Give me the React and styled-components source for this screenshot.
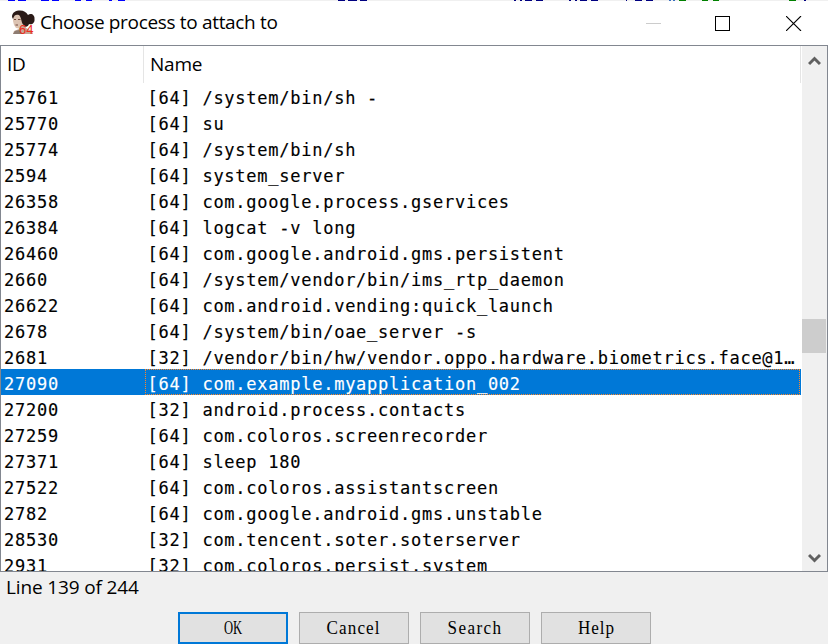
import React from 'react';
import styled, { createGlobalStyle } from 'styled-components';

const Global = createGlobalStyle`
  * { box-sizing: border-box; }
  body { margin: 0; overflow: hidden; background: #f0f0f0; }
`;

const Window = styled.div`
  width: 828px;
  height: 644px;
  display: flex;
  flex-direction: column;
  overflow: hidden;
  background: #f0f0f0;
  color: #000;
  font: 19px/26px "Open Sans", "Noto Sans", sans-serif;
`;

const Backdrop = styled.svg`
  display: block;
  flex: none;
  width: 828px;
  height: 1px;
`;

const TitleBar = styled.header`
  height: 44px;
  flex: none;
  display: flex;
  align-items: center;
  padding: 0 26px 0 11px;
  background: #fff;
`;

const AppIcon = styled.svg`
  width: 25px;
  height: 26px;
  flex: none;
`;

const Title = styled.h1`
  margin: 0 auto 2px 4px;
  font: inherit;
  white-space: nowrap;
  letter-spacing: ${(p) => p.$track}px;
`;

const Controls = styled.div`
  display: flex;
  gap: 54px;
  svg { display: block; }
  svg:last-child { margin-left: 2px; }
`;

const ListFrame = styled.main`
  height: 527px;
  flex: none;
  display: flex;
  border: 1px solid #828790;
  background: #fff;
`;

const Table = styled.div`
  width: 800px;
  height: 525px;
  overflow: hidden;
`;

const HeaderRow = styled.div`
  display: grid;
  grid-template-columns: 143px 657px;
  height: 37px;
`;

const HeaderCell = styled.div`
  border-right: 1px solid #e5e5e5;
  padding: 5px 0 0 6px;
  letter-spacing: -0.2px;
`;

const Row = styled.div`
  display: grid;
  grid-template-columns: 144px 655px;
  height: 26px;
  font: 17px/24px "DejaVu Sans Mono", "Liberation Mono", monospace;
  letter-spacing: 0.745px;
  -webkit-text-stroke: 0.15px currentColor;
  white-space: pre;
  color: ${(p) => (p.$selected ? '#fff' : '#000')};
  background: ${(p) => (p.$selected ? '#0078d7' : 'transparent')};
`;

const Cell = styled.div`
  padding: 3px 0 0 ${(p) => (p.$name ? 2.5 : 3)}px;
  height: 26px;
  outline: ${(p) => (p.$focused ? '1px dotted #ff8728' : 'none')};
  outline-offset: -1px;
`;

const ScrollBar = styled.div`
  width: 25px;
  margin-left: 1px;
  display: flex;
  flex-direction: column;
  background: #f0f0f0;
`;

const Arrow = styled.svg`
  display: block;
  width: 13px;
  height: 10px;
  margin: ${(p) => (p.$down ? 'auto 0 8px 6px' : '10px 0 0 6px')};
`;

const Thumb = styled.div`
  width: 24px;
  height: 34px;
  margin-top: 253px;
  background: #cdcdcd;
`;

const Status = styled.div`
  height: 40px;
  flex: none;
  padding: 2px 0 0 6px;
  letter-spacing: ${(p) => p.$track}px;
`;

const Footer = styled.footer`
  display: flex;
  gap: 11px;
  padding-left: 178px;
`;

const Button = styled.button`
  width: 110px;
  height: 32px;
  padding: 0;
  display: flex;
  align-items: center;
  justify-content: center;
  border: ${(p) => (p.$primary ? '2px solid #0078d7' : '1px solid #adadad')};
  border-radius: 0;
  background: #e1e1e1;
  color: #000;
  font: 18px/24px "Liberation Serif", serif;
`;

const Caption = styled.span`
  display: block;
  letter-spacing: ${(p) => p.$track}px;
  transform: scaleX(${(p) => p.$squeeze || 1});
`;

const processes = [
  ['25761', '[64] /system/bin/sh -'],
  ['25770', '[64] su'],
  ['25774', '[64] /system/bin/sh'],
  ['2594', '[64] system_server'],
  ['26358', '[64] com.google.process.gservices'],
  ['26384', '[64] logcat -v long'],
  ['26460', '[64] com.google.android.gms.persistent'],
  ['2660', '[64] /system/vendor/bin/ims_rtp_daemon'],
  ['26622', '[64] com.android.vending:quick_launch'],
  ['2678', '[64] /system/bin/oae_server -s'],
  ['2681', '[32] /vendor/bin/hw/vendor.oppo.hardware.biometrics.face@1…'],
  ['27090', '[64] com.example.myapplication_002'],
  ['27200', '[32] android.process.contacts'],
  ['27259', '[64] com.coloros.screenrecorder'],
  ['27371', '[64] sleep 180'],
  ['27522', '[64] com.coloros.assistantscreen'],
  ['2782', '[64] com.google.android.gms.unstable'],
  ['28530', '[32] com.tencent.soter.soterserver'],
  ['2931', '[32] com.coloros.persist.system'],
];

const marks = [
  [8, 7, '#00f'], [18, 8, '#00f'], [41, 8, '#00f'], [52, 7, '#00f'],
  [75, 6, '#00f'], [86, 6, '#00f'], [109, 3, '#00f'], [118, 7, '#00f'],
  [338, 7, '#000080'], [348, 9, '#000080'], [360, 7, '#000080'],
  [514, 2, '#000080'], [520, 2, '#000080'], [525, 7, '#000080'], [536, 7, '#000080'],
  [569, 2, '#000080'], [575, 2, '#000080'], [580, 7, '#000080'], [591, 7, '#000080'],
  [626, 1, '#000080'], [635, 7, '#000080'], [646, 7, '#000080'],
  [669, 2, '#3a6fc0'], [673, 2, '#3a6fc0'], [679, 7, '#008000'],
  [702, 6, '#008000'], [713, 6, '#008000'], [789, 7, '#008000'], [804, 2, '#000080'],
];

export default function App() {
  return (
    <Window>
      <Global />
      <Backdrop viewBox="0 0 828 1" shapeRendering="crispEdges">
        {marks.map(([x, w, c]) => <rect key={x} x={x} width={w} height="1" fill={c} />)}
      </Backdrop>
      <TitleBar>
        <AppIcon viewBox="0 0 25 26">
          <path d="M7 14L14 12L15 18L21 21L22 24H2L3 21L8 19Z" fill="#c3a796" />
          <path d="M2 24L4 21L8 20L12 24Z" fill="#8d7c72" />
          <path d="M2 7L5 4L10 4L13 9L12 15L8 18.5L5 18L3 15L2 11Z" fill="#dcc3b2" />
          <path d="M1 7C1 2 5 .5 9 .5C13 .5 15 2 17 5C20 2.500 24 5 23.500 9C24 13 21 15 18 14C17 17 14 18 13 15C10 14 11 8 8 5C5 4 3 5 2 9Z" fill="#2a1a17" />
          <path d="M3 9.500H5M7 9.500H9.500M4.500 15H7" stroke="#70493d" />
          <text x="8" y="23.500" fontFamily="Liberation Sans, sans-serif" fontSize="13" fill="#ef2c1b">64</text>
        </AppIcon>
        <Title $track={-0.33}>Choose process to attach to</Title>
        <Controls>
          <svg width="15" height="15"><path d="M0 7.5H15" stroke="#ccc" /></svg>
          <svg width="15" height="15"><rect x=".5" y=".5" width="14" height="14" fill="none" stroke="#000" /></svg>
          <svg width="16" height="15"><path d="M0 0L15 15M15 0L0 15" stroke="#000" strokeWidth="1.1" /></svg>
        </Controls>
      </TitleBar>
      <ListFrame>
        <Table>
          <HeaderRow>
            <HeaderCell>ID</HeaderCell>
            <HeaderCell>Name</HeaderCell>
          </HeaderRow>
          {processes.map(([id, name]) => (
            <Row key={id} $selected={id === '27090'}>
              <Cell>{id}</Cell>
              <Cell $name $focused={id === '27090'}>{name}</Cell>
            </Row>
          ))}
        </Table>
        <ScrollBar>
          <Arrow viewBox="0 0 13 10"><path d="M1 8L6.5 2.5L12 8" fill="none" stroke="#606060" strokeWidth="3" /></Arrow>
          <Thumb />
          <Arrow $down viewBox="0 0 13 10"><path d="M1 2L6.5 7.5L12 2" fill="none" stroke="#606060" strokeWidth="3" /></Arrow>
        </ScrollBar>
      </ListFrame>
      <Status $track={-0.15}>Line 139 of 244</Status>
      <Footer>
        <Button $primary><Caption $track={0} $squeeze={0.7}>OK</Caption></Button>
        <Button><Caption $track={1.2} $squeeze={0.95}>Cancel</Caption></Button>
        <Button><Caption $track={1.5} $squeeze={0.95}>Search</Caption></Button>
        <Button><Caption $track={1} $squeeze={0.95}>Help</Caption></Button>
      </Footer>
    </Window>
  );
}
